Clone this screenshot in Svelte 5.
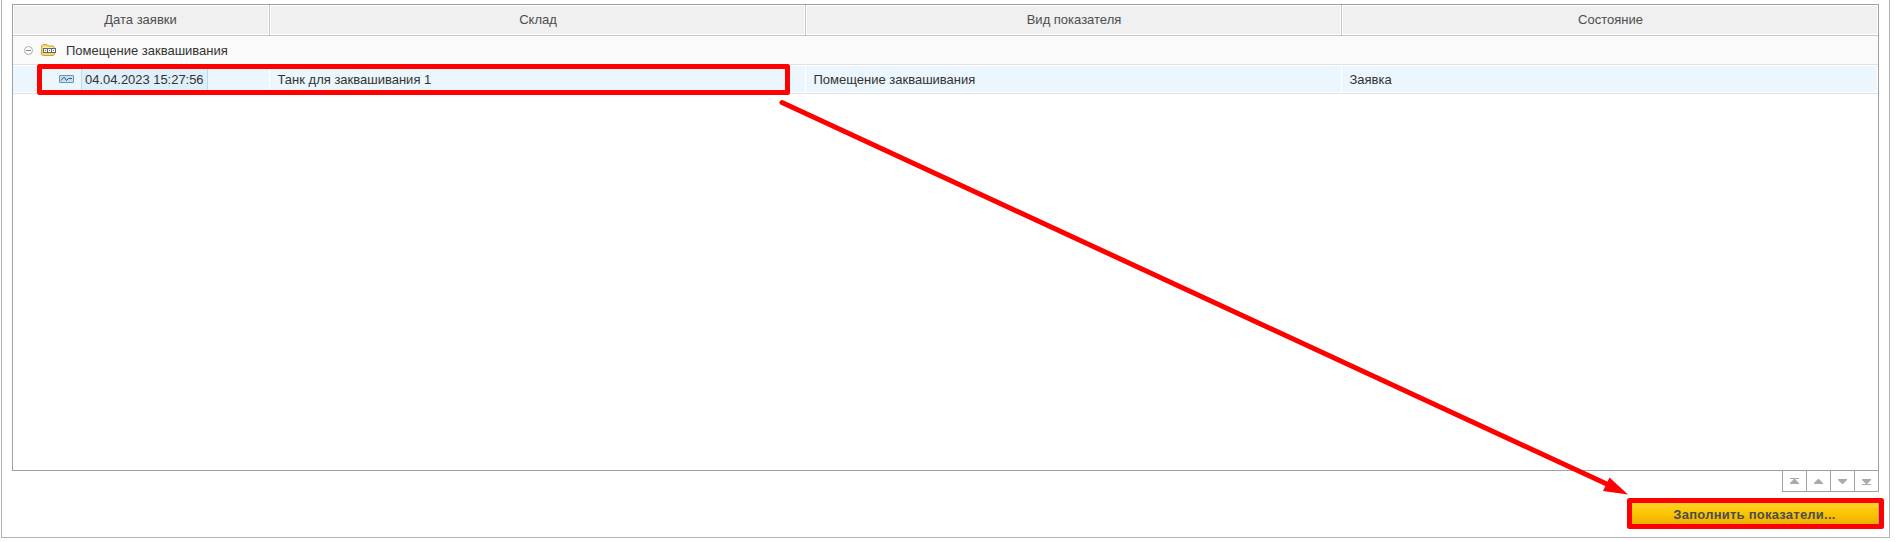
<script>
  const columns = ['Дата заявки', 'Склад', 'Вид показателя', 'Состояние'];
  const cells = ['Танк для заквашивания 1', 'Помещение заквашивания', 'Заявка'];
  const pager = [
    'M0 0H9V1H0ZM4 1H5L9 5V6H0V5Z',
    'M4 1H5L9 5V6H0V5Z',
    'M0 1H9V2L5 6H4L0 2Z',
    'M0 1H9V2L5 6H9V7H0V6H4L0 2Z'
  ];
</script>

<div class="window">
  <div class="table">
    <div class="row head">
      {#each columns as c}<div class="th"><span>{c}</span></div>{/each}
    </div>
    <div class="group">
      <svg class="toggle" width="9" height="9" viewBox="0 0 9 9"><circle cx="4.5" cy="4.5" r="4" fill="#fff" stroke="#aaa" /><path d="M2 4.5H7" stroke="#888" /></svg>
      <svg class="folder" width="16" height="12" viewBox="0 0 16 12">
        <path d="M.5 10.5V2L2 .5H6L7.5 2H12L13.5 3.5V10.5L12.5 11.5H1.5Z" fill="#f8d66d" stroke="#d0a03c" />
        <path d="M1.500 3.500H12" stroke="#fff0ae" />
        <path d="M2 4H15V9H2Z" fill="#5d6870" />
        <path d="M3 5H6V8H3ZM7 5H10V8H7ZM11 5H14V8H11Z" fill="#fff" />
        <path d="M4 6.500H5M8 6.500H9M12 6.500H13" stroke="#5d6870" />
      </svg>
      <span>Помещение заквашивания</span>
    </div>
    <div class="row data">
      <div class="td first">
        <svg width="15" height="8" viewBox="0 0 15 8"><rect x=".5" y=".5" width="14" height="7" rx=".5" fill="#c5e0f5" stroke="#7190aa" /><path d="M2 5.500L4.500 2.500H5.500L7.500 5.500L9.500 3.500H13" fill="none" stroke="#245983" /></svg>
        <span class="date">04.04.2023 15:27:56</span>
      </div>
      {#each cells as c}<div class="td"><span>{c}</span></div>{/each}
    </div>
  </div>
  <div class="pager">
    {#each pager as d}<button aria-label="page"><svg width="9" height="7" viewBox="0 0 9 7"><path {d} fill="#aaa" /></svg></button>{/each}
  </div>
  <button class="fill"><span>Заполнить показатели...</span></button>
  <svg class="marks" width="1898" height="542" viewBox="0 0 1898 542">
    <g fill="none" stroke="#f00" stroke-width="5" stroke-linejoin="round">
      <rect x="39.5" y="66.5" width="748" height="26" />
      <rect x="1629.500" y="500.500" width="252" height="26" />
      <path d="M782 102.500L1610 485.500" stroke-linecap="round" />
    </g>
    <path d="M1628 494.500L1609.500 477.500L1603 491Z" fill="#f00" />
  </svg>
</div>

<style>
  :global(body) { background: #fff; overflow: hidden; }
  .window { position: relative; box-sizing: border-box; width: 1889px; height: 538px; margin-left: 1px; padding: 4px 10px 0; border: 1px solid #b4b4b4; border-top: 0; font: 13px "Liberation Sans", Arial, sans-serif; color: #333; }
  .table { box-sizing: border-box; width: 1867px; height: 467px; border: 1px solid #a0a0a0; }
  .row { display: grid; grid-template-columns: 257px 536px 536px 536px; }
  .head { height: 30px; border-bottom: 1px solid #c6c6c6; color: #4d4d4d; }
  .th { display: flex; align-items: center; justify-content: center; background: #f0f0f0; box-sizing: border-box; border-right: 1px solid #c6c6c6; box-shadow: inset 0 0 0 1px #fff; padding: 0 0 1px 1px; }
  .th:first-child { padding: 0 1px 1px 0; }
  .th:last-child { border-right: 0; }
  .group { display: flex; align-items: center; box-sizing: border-box; height: 29px; padding-left: 11px; background: #fafafa; border-bottom: 1px solid #e1e1e1; }
  .folder { margin: 0 9px 0 8px; }
  .data { height: 28px; border-bottom: 1px solid #e1e1e1; }
  .td { display: flex; align-items: center; box-sizing: border-box; border: solid #fff; border-width: 1px 1px 1px 0; padding-left: 7.5px; background: #ecf6fe; }
  .first { padding-left: 46px; }
  .date { box-sizing: border-box; height: 26px; line-height: 28px; width: 127px; margin-left: 7px; padding-left: 3px; background: #dfeffc; border: solid #b6dcf9; border-width: 0 1px; letter-spacing: -.04px; }
  .pager { display: flex; justify-content: flex-end; width: 1867px; }
  .pager button { display: flex; align-items: flex-start; justify-content: center; box-sizing: border-box; width: 25px; height: 22px; margin: -1px 0 0 -1px; padding: 7px 0 0; border: 1px solid #a0a0a0; background: #fff; }
  .fill { display: block; box-sizing: border-box; width: 248px; height: 23px; margin: 10px 0 0 1619px; padding: 1px 0 0; border: 0; border-right: 1px solid #a0a0a0; background: linear-gradient(#ffd42d, #fcc400 50%, #e9ae00); color: #4d4d4d; font: bold 13px "Liberation Sans", Arial, sans-serif; letter-spacing: .24px; }
  span { white-space: nowrap; }
  .marks { position: absolute; left: -2px; top: 0; pointer-events: none; }
</style>
